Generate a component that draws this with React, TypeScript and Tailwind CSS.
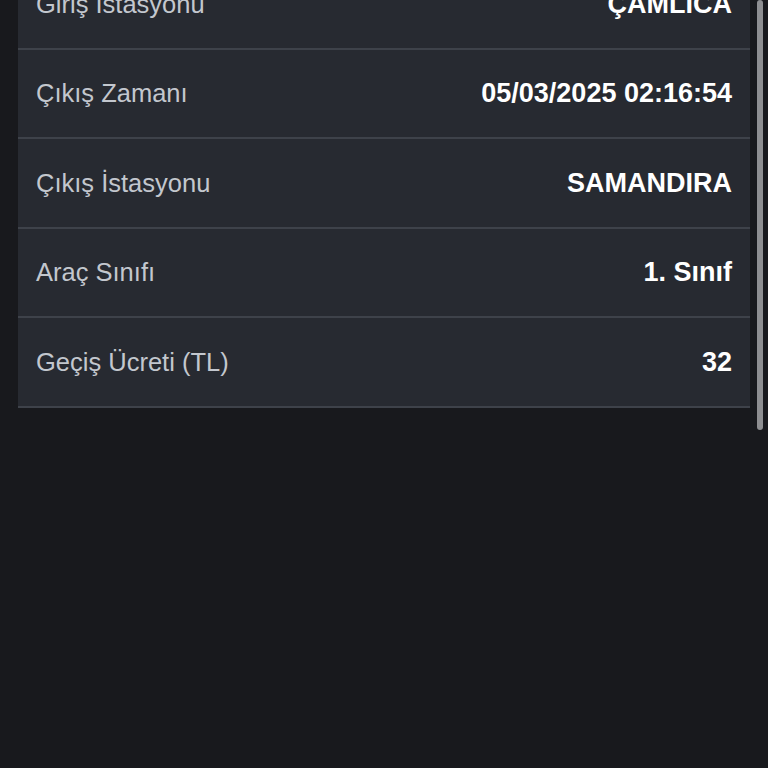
const rows = [
  { label: "Giriş İstasyonu", value: "ÇAMLICA" },
  { label: "Çıkış Zamanı", value: "05/03/2025 02:16:54" },
  { label: "Çıkış İstasyonu", value: "SAMANDIRA" },
  { label: "Araç Sınıfı", value: "1. Sınıf" },
  { label: "Geçiş Ücreti (TL)", value: "32" },
];

const App = () => {
  return (
    <div
      className="relative h-screen w-full overflow-hidden bg-[#18191d]"
      style={{ fontFamily: '"Liberation Sans", Arial, sans-serif' }}
    >
      <div className="-mt-[40px] mx-[18px]">
        {rows.map((r) => (
          <div
            key={r.label}
            className="flex items-center justify-between h-[89.5px] px-[18px] bg-[#272a31] border-b-2 border-[#3e424a]"
          >
            <span className="text-[25.5px] text-[#c3c7ce]">{r.label}</span>
            <span className="text-[27px] font-bold text-white">{r.value}</span>
          </div>
        ))}
      </div>
      <div className="absolute right-[5px] top-0 w-[6px] h-[430px] rounded-full bg-[#8d8e91]" />
    </div>
  );
};

export default App;
